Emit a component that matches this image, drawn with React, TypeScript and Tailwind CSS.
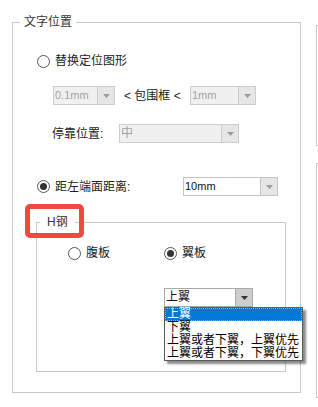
import React from "react";

function Radio({ checked }: { checked?: boolean }) {
  return (
    <div className="w-[13px] h-[13px] rounded-full border border-[#555555] bg-white flex items-center justify-center shrink-0">
      {checked ? <div className="w-[7px] h-[7px] rounded-full bg-[#333333]" /> : null}
    </div>
  );
}

function Arrow({ dark }: { dark?: boolean }) {
  return (
    <svg width="7" height="4" viewBox="0 0 7 4">
      <path d="M0 0 L7 0 L3.5 4 Z" fill={dark ? "#333333" : "#9a9a9a"} />
    </svg>
  );
}

function Sel({
  className,
  text,
  variant,
}: {
  className: string;
  text: string;
  variant: "disabled" | "normal" | "active";
}) {
  const box =
    variant === "disabled"
      ? "border-[#cccccc] bg-[#f0f0f0] text-[#a3a3a3]"
      : variant === "normal"
      ? "border-[#c4c4c4] bg-white text-[#111111]"
      : "border-[#a8a8a8] bg-white text-[#111111]";
  const arrow =
    variant === "active"
      ? "border-[#a8a8a8] bg-[#cdcdcd]"
      : variant === "normal"
      ? "border-[#c4c4c4] bg-[#e6e6e6]"
      : "border-[#cccccc] bg-[#e6e6e6]";
  const textSize = variant === "active" || text === "中" ? "text-[12px]" : "text-[11px]";
  return (
    <div className={`flex h-[19px] border shrink-0 ${box} ${className}`}>
      <div className={`flex-1 pl-[1px] leading-[17px] ${textSize}`}>{text}</div>
      <div className={`w-[17px] border-l flex items-center justify-center ${arrow}`}>
        <Arrow dark={variant === "active"} />
      </div>
    </div>
  );
}

export default function App() {
  return (
    <div className="relative w-[318px] h-[407px] overflow-hidden bg-white flex font-['Liberation_Sans','Noto_Sans_CJK_SC',sans-serif] text-[12px] text-[#222222]">
      <div className="ml-[12px] mt-[22px] relative w-[289px] h-[371px] border border-[#c8c8c8] shrink-0 flex flex-col">
        <span className="absolute left-[7px] top-[-9px] px-[4px] bg-white leading-[16px] text-[#333333]">
          文字位置
        </span>

        <div className="mt-[30px] pl-[24px] h-[16px] flex items-center">
          <Radio />
          <span className="ml-[5px] leading-[16px]">替换定位图形</span>
        </div>

        <div className="mt-[17px] pl-[40px] h-[19px] flex items-center">
          <Sel className="w-[62px]" text="0.1mm" variant="disabled" />
          <span className="w-[75px] pl-[9px] whitespace-pre leading-[16px]">{"< 包围框 <"}</span>
          <Sel className="w-[66px]" text="1mm" variant="disabled" />
        </div>

        <div className="mt-[19px] pl-[39px] h-[19px] flex items-center">
          <span className="w-[67px] leading-[16px]">停靠位置:</span>
          <Sel className="w-[120px]" text="中" variant="disabled" />
        </div>

        <div className="mt-[34px] pl-[24px] h-[19px] flex items-center">
          <Radio checked />
          <span className="ml-[5px] w-[128px] leading-[16px]">距左端面距离:</span>
          <Sel className="w-[95px]" text="10mm" variant="normal" />
        </div>

        <div className="mt-[26px] ml-[23px] w-[250px] h-[150px] relative border border-[#c8c8c8] flex flex-col">
          <span className="absolute left-[3px] top-[-9px] px-[7px] bg-white leading-[16px] text-[#333333]">
            H钢
          </span>
          <div className="mt-[22px] pl-[31px] h-[16px] flex items-center">
            <div className="w-[96px] flex items-center">
              <Radio />
              <span className="ml-[5px] leading-[16px]">腹板</span>
            </div>
            <Radio checked />
            <span className="ml-[5px] leading-[16px]">翼板</span>
          </div>
          <div className="mt-[27px] pl-[127px]">
            <div className="relative w-[89px]">
              <Sel className="w-[89px]" text="上翼" variant="active" />
              <div className="absolute left-0 top-[19px] w-[139px] border border-[#5a5a5a] bg-white shadow-[3px_3px_2px_rgba(0,0,0,0.45)] text-[12px] text-black z-10">
                <div className="h-[13px] leading-[11px] bg-[#0078d7] text-white border border-dotted border-[#f59a23] pl-[1px]">
                  上翼
                </div>
                <div className="h-[13px] leading-[13px] pl-[2px]">下翼</div>
                <div className="h-[13px] leading-[13px] pl-[2px] whitespace-nowrap">上翼或者下翼，上翼优先</div>
                <div className="h-[13px] leading-[13px] pl-[2px] whitespace-nowrap">上翼或者下翼，下翼优先</div>
              </div>
            </div>
          </div>
        </div>
      </div>

      <div className="ml-[15px] flex flex-col shrink-0">
        <div className="mt-[25px] h-[121px] w-[10px] border-l border-t border-b border-[#c8c8c8]" />
        <div className="mt-[17px] h-[235px] w-[10px] border-l border-t border-b border-[#c8c8c8]" />
      </div>

      <div className="absolute left-[25px] top-[204px] w-[59px] h-[34px] border-[5px] border-[#ef4a3d] rounded-[5px]" />
    </div>
  );
}
